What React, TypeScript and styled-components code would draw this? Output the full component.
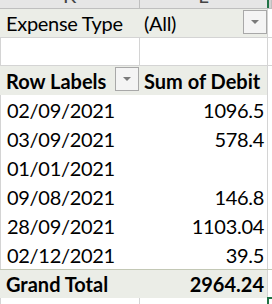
import React from 'react';
import styled, { createGlobalStyle } from 'styled-components';

const colors = {
  fill: '#ebede7',
  grid: '#d4d4d4',
  headerBg: '#e6e6e6',
  headerLine: '#bfbfbf',
  totalLine: '#c3c8b5',
  text: '#000000',
  green: '#217346',
  button: '#f4f4f4',
  buttonBorder: '#a8a8a8',
  arrow: '#7a7a7a',
};

const GlobalStyle = createGlobalStyle`
  html, body {
    margin: 0;
    padding: 0;
    background: #ffffff;
  }
  body {
    font-family: Lato, "Open Sans", sans-serif;
    color: ${colors.text};
  }
`;

const Sheet = styled.div`
  position: relative;
  width: 272px;
  height: 304px;
  overflow: hidden;
  background: #ffffff;
`;

const ColumnHeaders = styled.div`
  display: grid;
  grid-template-columns: 140px 128px 1fr;
  height: 9px;
  background: ${colors.headerBg};
  border-bottom: 1px solid ${colors.headerLine};
  box-sizing: border-box;
`;

const ColumnLetter = styled.div<{ $selected?: boolean }>`
  display: flex;
  justify-content: center;
  align-items: flex-start;
  overflow: hidden;
  box-sizing: border-box;
  border-right: 1px solid ${colors.headerLine};
  background: ${(p) => (p.$selected ? '#d2d2d2' : 'transparent')};
  font-size: 20px;
  line-height: 20px;
  color: #444444;

  span {
    margin-top: -15px;
  }
`;

const Row = styled.div<{ $height: number; $topLine?: string; $bottomLine?: string }>`
  display: grid;
  grid-template-columns: 140px 128px 1fr;
  height: ${(p) => p.$height}px;
  box-sizing: border-box;
  border-top: ${(p) => (p.$topLine ? `1px solid ${p.$topLine}` : 'none')};
  border-bottom: ${(p) => (p.$bottomLine ? `1px solid ${p.$bottomLine}` : 'none')};
`;

const Cell = styled.div<{
  $fill?: boolean;
  $left?: boolean;
  $right?: boolean;
  $align?: 'left' | 'right';
  $bold?: boolean;
}>`
  display: flex;
  align-items: flex-end;
  justify-content: ${(p) => (p.$align === 'right' ? 'flex-end' : 'flex-start')};
  box-sizing: border-box;
  background: ${(p) => (p.$fill ? colors.fill : '#ffffff')};
  border-left: ${(p) => (p.$left ? `1px solid ${colors.grid}` : 'none')};
  border-right: ${(p) => (p.$right ? `1px solid ${colors.grid}` : 'none')};
  padding: 0 ${(p) => (p.$align === 'right' ? 3 : 0)}px 3px ${(p) => (p.$align === 'right' ? 0 : 6)}px;
  font-size: 20px;
  letter-spacing: ${(p) => (p.$bold ? '0' : '-0.3px')};
  line-height: 22px;
  font-weight: ${(p) => (p.$bold ? 700 : 400)};
  white-space: nowrap;
`;

const ValueCell = styled(Cell)`
  padding-left: 4px;
`;

const Spacer = styled.div`
  flex: 1;
`;

const DropButton = styled.div`
  width: 24px;
  height: 24px;
  box-sizing: border-box;
  border: 1px solid ${colors.buttonBorder};
  background: ${colors.button};
  display: flex;
  align-items: center;
  justify-content: center;
  align-self: center;
`;

const Arrow = styled.div`
  width: 0;
  height: 0;
  border-left: 4px solid transparent;
  border-right: 4px solid transparent;
  border-top: 4px solid ${colors.arrow};
`;

const HeaderGreen = styled.div`
  position: absolute;
  left: 267px;
  top: 0;
  width: 2px;
  height: 8px;
  background: ${colors.green};
`;

const SelectionCorner = styled.div`
  position: absolute;
  left: 267px;
  top: 297px;
  width: 10px;
  height: 10px;
  box-sizing: border-box;
  border-left: 2px solid ${colors.green};
  border-top: 2px solid ${colors.green};
`;

const rows: { date: string; debit: string }[] = [
  { date: '02/09/2021', debit: '1096.5' },
  { date: '03/09/2021', debit: '578.4' },
  { date: '01/01/2021', debit: '' },
  { date: '09/08/2021', debit: '146.8' },
  { date: '28/09/2021', debit: '1103.04' },
  { date: '02/12/2021', debit: '39.5' },
];

const Dropdown = () => (
  <DropButton>
    <Arrow />
  </DropButton>
);

export default function App() {
  return (
    <>
      <GlobalStyle />
      <Sheet>
        <ColumnHeaders>
          <ColumnLetter>
            <span>K</span>
          </ColumnLetter>
          <ColumnLetter>
            <span>L</span>
          </ColumnLetter>
          <ColumnLetter $selected />
        </ColumnHeaders>

        <Row $height={29} $bottomLine={colors.grid}>
          <Cell $fill>Expense Type</Cell>
          <ValueCell $fill $right style={{ paddingRight: 0 }}>
            (All)
            <Spacer />
            <Dropdown />
          </ValueCell>
          <Cell />
        </Row>

        <Row $height={28} $bottomLine={colors.grid}>
          <Cell $left $right />
          <Cell $right />
          <Cell />
        </Row>

        <Row $height={29}>
          <Cell $fill $bold style={{ paddingRight: 1 }}>
            Row Labels
            <Spacer />
            <Dropdown />
          </Cell>
          <ValueCell $fill $bold $right>
            Sum of Debit
          </ValueCell>
          <Cell />
        </Row>

        {rows.map((r) => (
          <Row key={r.date} $height={29}>
            <Cell $left>{r.date}</Cell>
            <Cell $align="right" $right>
              {r.debit}
            </Cell>
            <Cell />
          </Row>
        ))}

        <Row $height={29} $topLine={colors.totalLine}>
          <Cell $fill $bold>
            Grand Total
          </Cell>
          <Cell $fill $bold $align="right" $right>
            2964.24
          </Cell>
          <Cell />
        </Row>

        <Row $height={8}>
          <Cell $left $right />
          <Cell $right />
          <Cell />
        </Row>

        <HeaderGreen />
        <SelectionCorner />
      </Sheet>
    </>
  );
}
